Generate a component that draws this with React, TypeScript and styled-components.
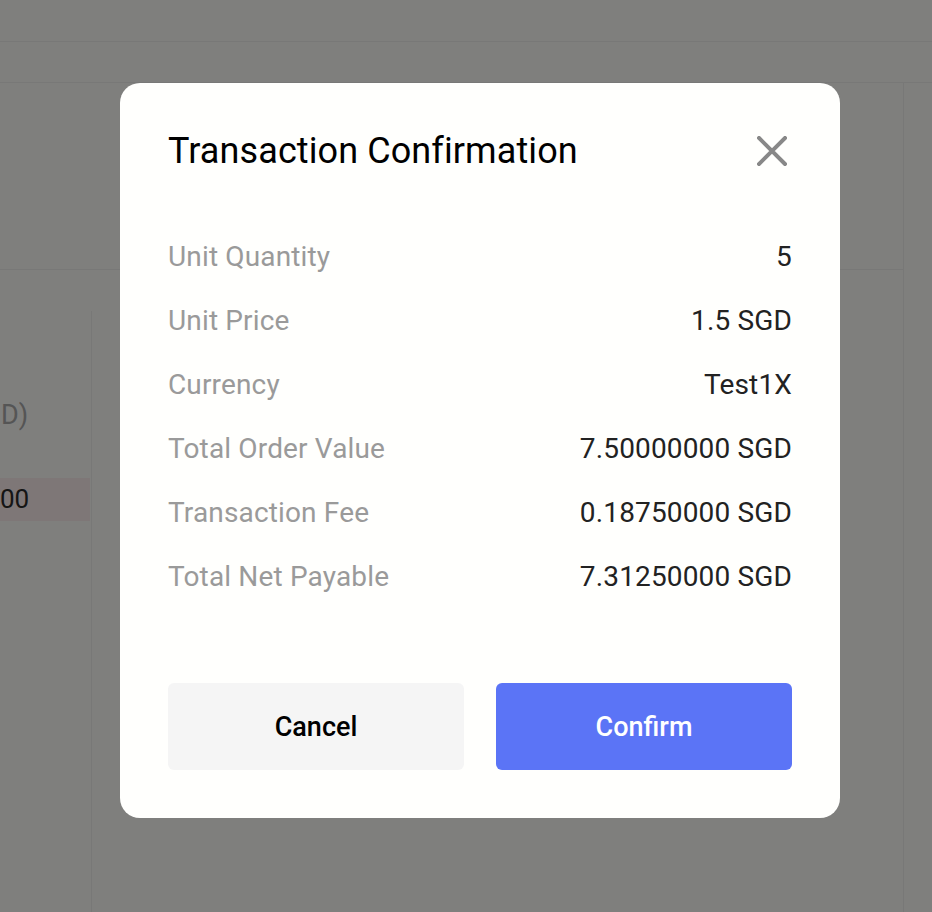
import React from "react";
import styled, { createGlobalStyle } from "styled-components";

const GlobalStyle = createGlobalStyle`
  html, body {
    margin: 0;
    padding: 0;
    background: #fefefb;
    font-family: Roboto, "Liberation Sans", sans-serif;
  }
  * { box-sizing: border-box; }
`;

interface Row {
  label: string;
  value: string;
}

const rows: Row[] = [
  { label: "Unit Quantity", value: "5" },
  { label: "Unit Price", value: "1.5 SGD" },
  { label: "Currency", value: "Test1X" },
  { label: "Total Order Value", value: "7.50000000 SGD" },
  { label: "Transaction Fee", value: "0.18750000 SGD" },
  { label: "Total Net Payable", value: "7.31250000 SGD" },
];

const CloseIcon = () => (
  <svg width="30" height="30" viewBox="0 0 30 30">
    <path
      d="M2 2 L28 28 M28 2 L2 28"
      stroke="#888888"
      strokeWidth="4"
      strokeLinecap="square"
    />
  </svg>
);

const App: React.FC = () => {
  return (
    <>
      <GlobalStyle />
      <Page>
        <TopBar />
        <SubBar />
        <Main>
          <Content>
            <Summary />
            <TableArea>
              <SideColumn>
                <HeadCell>D)</HeadCell>
                <PriceCell>00</PriceCell>
              </SideColumn>
            </TableArea>
          </Content>
          <Rail />
        </Main>
      </Page>

      <Overlay>
        <Modal>
          <Header>
            <Title>Transaction Confirmation</Title>
            <CloseButton aria-label="Close">
              <CloseIcon />
            </CloseButton>
          </Header>
          <Details>
            {rows.map((r) => (
              <DetailRow key={r.label}>
                <Label>{r.label}</Label>
                <Value>{r.value}</Value>
              </DetailRow>
            ))}
          </Details>
          <Actions>
            <Button>Cancel</Button>
            <Button primary>Confirm</Button>
          </Actions>
        </Modal>
      </Overlay>
    </>
  );
};

export default App;

const Page = styled.div`
  height: 912px;
  overflow: hidden;
  display: flex;
  flex-direction: column;
`;

const TopBar = styled.div`
  height: 42px;
  flex-shrink: 0;
  border-bottom: 1px solid #f1f1ef;
`;

const SubBar = styled.div`
  height: 41px;
  flex-shrink: 0;
  border-bottom: 1px solid #f1f1ef;
`;

const Main = styled.div`
  flex: 1;
  display: flex;
`;

const Content = styled.div`
  width: 904px;
  border-right: 1px solid #f1f1ef;
  display: flex;
  flex-direction: column;
`;

const Summary = styled.div`
  height: 187px;
  border-bottom: 1px solid #f1f1ef;
`;

const TableArea = styled.div`
  flex: 1;
  padding-top: 41px;
  display: flex;
`;

const SideColumn = styled.div`
  width: 92px;
  border-right: 1px solid #f1f1ef;
  display: flex;
  flex-direction: column;
`;

const HeadCell = styled.div`
  margin-top: 88px;
  padding-left: 1px;
  font-size: 27px;
  line-height: 32px;
  color: #aaaaaa;
`;

const PriceCell = styled.div`
  margin-top: 47px;
  width: 90px;
  height: 43px;
  background: #fdeeee;
  font-size: 26px;
  line-height: 43px;
  color: #2a2a2a;
`;

const Rail = styled.div`
  flex: 1;
`;

const Overlay = styled.div`
  position: fixed;
  inset: 0;
  background: rgba(0, 0, 0, 0.5);
  display: flex;
  justify-content: center;
  align-items: flex-start;
  padding-top: 83px;
  padding-left: 28px;
`;

const Modal = styled.div`
  width: 720px;
  background: #fffffd;
  border-radius: 20px;
  padding: 48px;
  display: flex;
  flex-direction: column;
`;

const Header = styled.div`
  display: flex;
  align-items: center;
  justify-content: space-between;
  height: 40px;
  margin-bottom: 53px;
`;

const Title = styled.h2`
  margin: 0;
  font-size: 36px;
  font-weight: 400;
  letter-spacing: 0.1px;
  color: #000;
  line-height: 40px;
`;

const CloseButton = styled.button`
  border: none;
  background: none;
  padding: 0;
  margin-right: 5px;
  width: 30px;
  height: 30px;
  display: flex;
  cursor: pointer;
`;

const Details = styled.div`
  display: flex;
  flex-direction: column;
`;

const DetailRow = styled.div`
  display: flex;
  justify-content: space-between;
  align-items: center;
  height: 64px;
  font-size: 28px;
  letter-spacing: 0.15px;
`;

const Label = styled.span`
  color: #9a9a9a;
`;

const Value = styled.span`
  color: #222;
`;

const Actions = styled.div`
  display: grid;
  grid-template-columns: 1fr 1fr;
  gap: 32px;
  margin-top: 75px;
`;

const Button = styled.button<{ primary?: boolean }>`
  height: 87px;
  border: none;
  border-radius: 6px;
  font-family: Roboto, "Liberation Sans", sans-serif;
  font-size: 27px;
  font-weight: 500;
  cursor: pointer;
  background: ${(p) => (p.primary ? "#5b74f6" : "#f5f5f5")};
  color: ${(p) => (p.primary ? "#fff" : "#000")};
`;
